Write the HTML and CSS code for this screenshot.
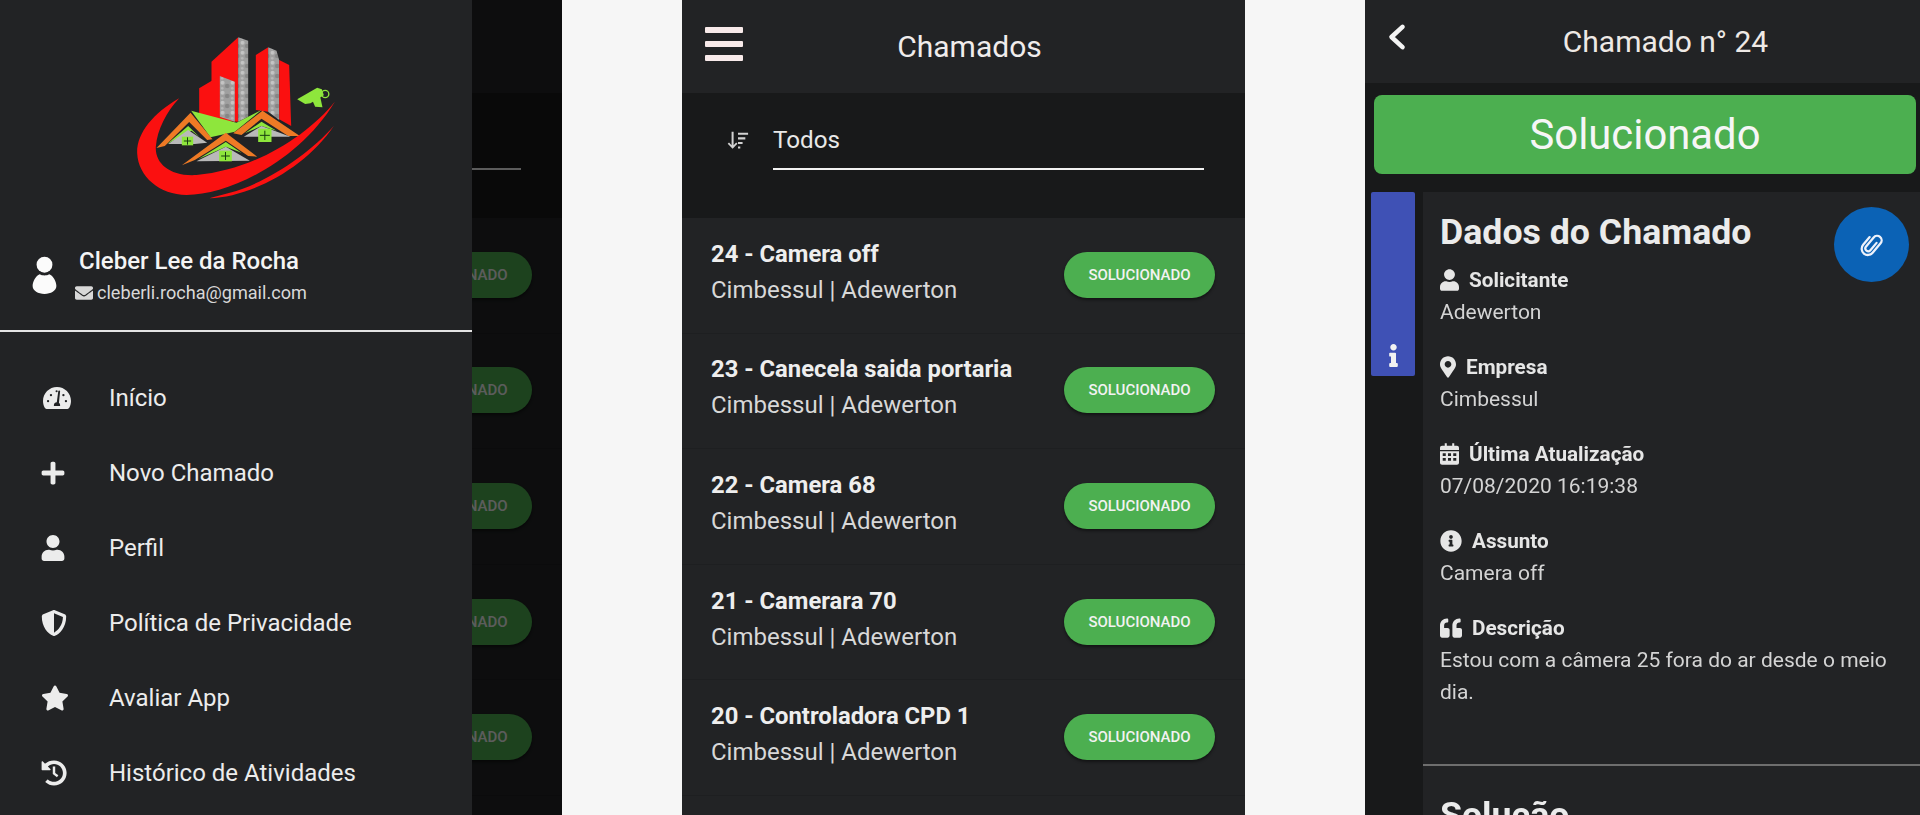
FILE: index.html
```html
<!DOCTYPE html>
<html lang="pt-BR">
<head>
<meta charset="utf-8">
<title>Chamados</title>
<link rel="stylesheet" href="styles.css">
</head>
<body>
<svg class="defs" aria-hidden="true">
  <symbol id="i-user" viewBox="0 0 448 512"><path d="M224 256c70.7 0 128-57.3 128-128S294.7 0 224 0 96 57.3 96 128s57.3 128 128 128zm89.6 32h-16.7c-22.2 10.2-46.9 16-72.9 16s-50.6-5.8-72.9-16h-16.7C60.2 288 0 348.2 0 422.4V464c0 26.5 21.5 48 48 48h352c26.5 0 48-21.5 48-48v-41.6c0-74.2-60.2-134.4-134.4-134.4z"/></symbol>
  <symbol id="i-plus" viewBox="0 0 448 512"><path d="M416 208H272V64c0-17.67-14.33-32-32-32h-32c-17.67 0-32 14.33-32 32v144H32c-17.67 0-32 14.33-32 32v32c0 17.67 14.33 32 32 32h144v144c0 17.67 14.33 32 32 32h32c17.67 0 32-14.33 32-32V304h144c17.67 0 32-14.33 32-32v-32c0-17.67-14.33-32-32-32z"/></symbol>
  <symbol id="i-star" viewBox="0 0 576 512"><path d="M259.3 17.8L194 150.2 47.9 171.5c-26.2 3.8-36.7 36.1-17.7 54.6l105.7 103-25 145.5c-4.5 26.3 23.2 46 46.4 33.7L288 439.6l130.7 68.7c23.2 12.2 50.9-7.4 46.4-33.7l-25-145.5 105.7-103c19-18.5 8.5-50.8-17.7-54.6L382 150.2 316.7 17.8c-11.7-23.6-45.6-23.9-57.4 0z"/></symbol>
  <symbol id="i-marker" viewBox="0 0 384 512"><path d="M172.268 501.67C26.97 291.031 0 255.363 0 192 0 85.961 85.961 0 192 0s192 85.961 192 192c0 63.363-26.97 99.031-172.268 309.67-9.535 13.774-29.93 13.773-39.464 0zM192 272c44.183 0 80-35.817 80-80s-35.817-80-80-80-80 35.817-80 80 35.817 80 80 80z"/></symbol>
  <symbol id="i-mail" viewBox="0 0 512 512"><path d="M502.3 190.8c3.9-3.1 9.7-.2 9.7 4.7V400c0 26.5-21.5 48-48 48H48c-26.5 0-48-21.5-48-48V195.6c0-5 5.7-7.8 9.7-4.7 22.4 17.4 52.1 39.5 154.1 113.6 21.1 15.4 56.7 47.8 92.2 47.6 35.7.3 72-32.8 92.3-47.6 102-74.1 131.6-96.3 154-113.7zM256 320c23.2.4 56.6-29.2 73.4-41.4 132.7-96.3 142.8-104.7 173.4-128.7 5.8-4.5 9.2-11.5 9.2-18.9v-19c0-26.5-21.5-48-48-48H48C21.5 64 0 85.5 0 112v19c0 7.4 3.4 14.3 9.2 18.9 30.6 23.9 40.7 32.4 173.4 128.7 16.8 12.2 50.2 41.8 73.4 41.4z"/></symbol>
  <symbol id="i-info" viewBox="0 0 512 512"><path d="M256 8C119.043 8 8 119.083 8 256c0 136.997 111.043 248 248 248s248-111.003 248-248C504 119.083 392.957 8 256 8zm0 110c23.196 0 42 18.804 42 42s-18.804 42-42 42-42-18.804-42-42 18.804-42 42-42zm56 254c0 6.627-5.373 12-12 12h-88c-6.627 0-12-5.373-12-12v-24c0-6.627 5.373-12 12-12h12v-64h-12c-6.627 0-12-5.373-12-12v-24c0-6.627 5.373-12 12-12h64c6.627 0 12 5.373 12 12v100h12c6.627 0 12 5.373 12 12v24z"/></symbol>
  <symbol id="i-quote" viewBox="0 0 512 512"><path d="M464 256h-80v-64c0-35.3 28.7-64 64-64h8c13.3 0 24-10.7 24-24V56c0-13.3-10.7-24-24-24h-8c-88.4 0-160 71.6-160 160v240c0 26.5 21.5 48 48 48h128c26.5 0 48-21.5 48-48V304c0-26.5-21.5-48-48-48zm-288 0H96v-64c0-35.3 28.7-64 64-64h8c13.3 0 24-10.7 24-24V56c0-13.3-10.7-24-24-24h-8C71.6 32 0 103.6 0 192v240c0 26.5 21.5 48 48 48h128c26.5 0 48-21.5 48-48V304c0-26.5-21.5-48-48-48z"/></symbol>
  <symbol id="i-i" viewBox="0 0 192 512"><path d="M20 424.229h20V279.771H20c-11.046 0-20-8.954-20-20V212c0-11.046 8.954-20 20-20h112c11.046 0 20 8.954 20 20v212.229h20c11.046 0 20 8.954 20 20V492c0 11.046-8.954 20-20 20H20c-11.046 0-20-8.954-20-20v-47.771c0-11.046 8.954-20 20-20zM96 0C56.235 0 24 32.235 24 72s32.235 72 72 72 72-32.235 72-72S135.764 0 96 0z"/></symbol>
  <symbol id="i-cal" viewBox="0 0 448 512"><path fill-rule="evenodd" d="M112 0h48v64h128V0h48v64h64c26 0 48 22 48 48v48H0v-48c0-26 22-48 48-48h64zM0 192h448v272c0 26-22 48-48 48H48c-26 0-48-22-48-48zM64 240v64h72v-64zm124 0v64h72v-64zm124 0v64h72v-64zM64 352v64h72v-64zm124 0v64h72v-64zm124 0v64h72v-64z"/></symbol>
  <symbol id="i-gauge" viewBox="0 0 576 448"><path fill-rule="evenodd" d="M288 0C129 0 0 129 0 288c0 50 13 98 36 139 7 13 20 21 35 21h434c15 0 28-8 35-21 23-41 36-89 36-139C576 129 447 0 288 0zm-8 62a22 22 0 1 1 0 44 22 22 0 0 1 0-44zM104 312a24 24 0 1 1 0-48 24 24 0 0 1 0 48zm60-124a24 24 0 1 1 0-48 24 24 0 0 1 0 48zm188-102l-24 236c14 10 24 28 24 48v18H224v-18c0-32 28-58 60-58l30-226c2-10 10-16 20-14 10 1 18 4 18 14zm68 102a24 24 0 1 1 0-48 24 24 0 0 1 0 48zm52 124a24 24 0 1 1 0-48 24 24 0 0 1 0 48z"/></symbol>
  <symbol id="i-shield" viewBox="0 0 512 512"><path d="M466 83L274 3a48 48 0 0 0-37 0L45 83C27 90 16 108 16 127c0 199 115 337 222 381a48 48 0 0 0 37 0c86-36 221-159 221-381 0-19-12-37-30-44zM256 446V66l176 73c-4 153-90 260-176 307z"/></symbol>
  <symbol id="i-history" viewBox="0 0 512 512"><path d="M504 255.500c.3 137-111.500 248.500-248 248.500-64 0-122-24-166-64-5-5-5-13 0-18l34-34c4-4 11-5 16-1 32 27 72 43 116 43 80 0 176-69 176-174 0-97-79-176-176-176-47 0-90 18-121 49l50 50c8 8 2 21-8 21H24c-7 0-12-5-12-12V35c0-11 13-16 20-8l48 48C125 31 187 8 256 8c137 0 248 111 248 247.500zM280 128h-48v150l82 60 28-39-62-45z"/></symbol>
  <symbol id="i-sort" viewBox="0 0 24 24"><path d="M5 2h2.200v14.500L10 13.700l1.400 1.400L6.100 20.500.8 15.100l1.400-1.400L5 16.500zM12 3h11v2.300H12zM12 8h8v2.300h-8zM12 13h5v2.300h-5zM12 18h2.500v2.300H12z"/></symbol>
  <symbol id="i-clip" viewBox="0 0 24 24"><path fill="none" stroke="currentColor" stroke-width="2" stroke-linecap="round" transform="rotate(40 12 12)" d="M14.500 8v8.500a2.500 2.500 0 0 1-5 0V6a4 4 0 0 1 8 0v11a5.500 5.500 0 0 1-11 0V8"/></symbol>
  <symbol id="i-chevron" viewBox="0 0 24 32"><path fill="none" stroke="currentColor" stroke-width="5" stroke-linecap="round" stroke-linejoin="round" d="M18 5L6 16l12 11"/></symbol>
</svg>

<main class="stage">

  <!-- Aberto: gaveta lateral sobre a lista -->
  <section class="phone phone-list">
    <header class="topbar"></header>
    <div class="filter">
      <div class="select"></div>
    </div>
    <ul class="tickets">
      <li class="ticket"><span class="pill">SOLUCIONADO</span></li>
      <li class="ticket"><span class="pill">SOLUCIONADO</span></li>
      <li class="ticket"><span class="pill">SOLUCIONADO</span></li>
      <li class="ticket"><span class="pill">SOLUCIONADO</span></li>
      <li class="ticket"><span class="pill">SOLUCIONADO</span></li>
    </ul>
    <div class="scrim"></div>
    <aside class="drawer">
      <div class="logo-wrap">
        <svg class="logo" viewBox="40 45 620 495">
          <defs>
            <pattern id="concrete" width="30" height="30" patternUnits="userSpaceOnUse">
              <rect width="30" height="30" fill="#9f9f9f"/>
              <circle cx="8" cy="8" r="6" fill="#c4c4c4"/>
              <circle cx="22" cy="18" r="7" fill="#868686"/>
              <circle cx="7" cy="25" r="4" fill="#b8b8b8"/>
            </pattern>
          </defs>
          <path fill="#fb1010" d="M275 125L355 52V305L275 300Z"/>
          <path fill="url(#concrete)" d="M355 52L385 62V290L355 305Z"/>
          <path fill="#fb1010" d="M238 205L300 168V300L238 290Z"/>
          <path fill="url(#concrete)" d="M300 168L345 185V305L300 290Z"/>
          <path fill="#fb1010" d="M408 105L445 82V275L408 270Z"/>
          <path fill="url(#concrete)" d="M445 82L470 92L478 120V300L445 275Z"/>
          <path fill="#fb1010" d="M478 120L508 135L514 318L478 298Z"/>
          <path fill="#8ee63c" d="M214 272L350 308L425 270L345 335L272 352Z"/>
          <path fill="#ee7a25" d="M110 384L212 278L278 358L262 360L208 306L135 378Z"/>
          <path fill="#8ee63c" d="M142 372L205 318L240 352L215 332Z"/>
          <path fill="#b9b9b9" d="M145 372L205 330L262 368L225 372Z"/>
          <path fill="#8ee63c" d="M186 350H220V376H186Z"/>
          <path fill="#ee7a25" d="M340 340L428 272L540 348L505 348L425 296L365 345Z"/>
          <path fill="#8ee63c" d="M375 340L425 305L470 332L425 318Z"/>
          <path fill="#b9b9b9" d="M372 350L425 318L512 350Z"/>
          <path fill="#8ee63c" d="M415 326H455V366H415Z"/>
          <path fill="#ee7a25" d="M186 436L318 338L412 410L385 408L318 362L225 420Z"/>
          <path fill="#8ee63c" d="M235 418L318 366L365 398L318 380Z"/>
          <path fill="#b9b9b9" d="M230 424L318 380L390 422Z"/>
          <path fill="#8ee63c" d="M298 392H336V424H298Z"/>
          <path stroke="#173d10" stroke-width="3" fill="none" d="M203 352V374M192 363H214M435 332V360M420 346H450M317 396V420M304 408H330"/>
          <path fill="#8ee63c" d="M532 238L592 203L606 208L612 226L572 250L556 252Z"/>
          <path fill="#8ee63c" d="M578 242L600 226L608 262L586 260Z"/>
          <circle cx="616" cy="222" r="11" fill="none" stroke="#8ee63c" stroke-width="4"/>
          <path fill="#fb1010" d="M178 235C100 280 50 340 52 400C55 470 120 525 200 525C330 525 540 420 645 245C560 350 400 450 230 465C150 470 105 430 108 380C112 330 140 275 178 235Z"/>
          <path fill="#fb1010" d="M268 535C400 530 560 440 642 318C570 400 440 490 330 518Z"/>
        </svg>
      </div>
      <div class="profile">
        <svg class="profile-icon" viewBox="0 0 30 48">
          <circle cx="15" cy="11" r="10"/>
          <path d="M9 23c3 2 9 2 12 0 5 2 9 9 9 15 0 6-7 10-15 10S0 44 0 38c0-6 4-13 9-15z"/>
        </svg>
        <div class="profile-text">
          <p class="profile-name">Cleber Lee da Rocha</p>
          <p class="profile-mail"><svg class="mail-icon"><use href="#i-mail"/></svg>cleberli.rocha@gmail.com</p>
        </div>
      </div>
      <nav class="menu">
        <a class="menu-item"><span class="menu-icon"><svg class="ico-gauge"><use href="#i-gauge"/></svg></span>Início</a>
        <a class="menu-item"><span class="menu-icon"><svg class="ico-26"><use href="#i-plus"/></svg></span>Novo Chamado</a>
        <a class="menu-item"><span class="menu-icon"><svg class="ico-26"><use href="#i-user"/></svg></span>Perfil</a>
        <a class="menu-item"><span class="menu-icon"><svg class="ico-28"><use href="#i-shield"/></svg></span>Política de Privacidade</a>
        <a class="menu-item"><span class="menu-icon"><svg class="ico-30"><use href="#i-star"/></svg></span>Avaliar App</a>
        <a class="menu-item"><span class="menu-icon"><svg class="ico-28"><use href="#i-history"/></svg></span>Histórico de Atividades</a>
      </nav>
    </aside>
  </section>

  <!-- Lista de chamados -->
  <section class="phone phone-list">
    <header class="topbar">
      <div class="burger"><span></span><span></span><span></span></div>
      <h1 class="topbar-title">Chamados</h1>
    </header>
    <div class="filter">
      <svg class="sort-icon"><use href="#i-sort"/></svg>
      <div class="select">Todos</div>
    </div>
    <ul class="tickets">
      <li class="ticket"><div class="ticket-text"><p class="ticket-title">24 - Camera off</p><p class="ticket-sub">Cimbessul | Adewerton</p></div><span class="pill">SOLUCIONADO</span></li>
      <li class="ticket"><div class="ticket-text"><p class="ticket-title">23 - Canecela saida portaria</p><p class="ticket-sub">Cimbessul | Adewerton</p></div><span class="pill">SOLUCIONADO</span></li>
      <li class="ticket"><div class="ticket-text"><p class="ticket-title">22 - Camera 68</p><p class="ticket-sub">Cimbessul | Adewerton</p></div><span class="pill">SOLUCIONADO</span></li>
      <li class="ticket"><div class="ticket-text"><p class="ticket-title">21 - Camerara 70</p><p class="ticket-sub">Cimbessul | Adewerton</p></div><span class="pill">SOLUCIONADO</span></li>
      <li class="ticket"><div class="ticket-text"><p class="ticket-title">20 - Controladora CPD 1</p><p class="ticket-sub">Cimbessul | Adewerton</p></div><span class="pill">SOLUCIONADO</span></li>
    </ul>
  </section>

  <!-- Detalhe do chamado -->
  <section class="phone phone-detail">
    <header class="detail-bar">
      <svg class="back"><use href="#i-chevron"/></svg>
      <h1 class="detail-title">Chamado n° 24</h1>
    </header>
    <div class="status">Solucionado</div>
    <div class="detail-body">
      <div class="rail">
        <div class="rail-tab"><svg class="rail-i"><use href="#i-i"/></svg></div>
      </div>
      <article class="card">
        <button class="fab"><svg class="fab-icon"><use href="#i-clip"/></svg></button>
        <div class="card-main">
          <h2 class="card-title">Dados do Chamado</h2>
          <div class="field field-first">
            <p class="field-label"><svg class="field-icon"><use href="#i-user"/></svg>Solicitante</p>
            <p class="field-value">Adewerton</p>
          </div>
          <div class="field">
            <p class="field-label"><svg class="field-icon field-icon-narrow"><use href="#i-marker"/></svg>Empresa</p>
            <p class="field-value">Cimbessul</p>
          </div>
          <div class="field">
            <p class="field-label"><svg class="field-icon"><use href="#i-cal"/></svg>Última Atualização</p>
            <p class="field-value">07/08/2020 16:19:38</p>
          </div>
          <div class="field">
            <p class="field-label"><svg class="field-icon field-icon-wide"><use href="#i-info"/></svg>Assunto</p>
            <p class="field-value">Camera off</p>
          </div>
          <div class="field">
            <p class="field-label"><svg class="field-icon field-icon-wide"><use href="#i-quote"/></svg>Descrição</p>
            <p class="field-value">Estou com a câmera 25 fora do ar desde o meio dia.</p>
          </div>
        </div>
        <div class="card-next">
          <h2 class="card-title">Solução</h2>
        </div>
      </article>
    </div>
  </section>
</main>
</body>
</html>
```

FILE: styles.css
```css
* { box-sizing: border-box; }
html, body { margin: 0; height: 100%; overflow: hidden; }
body {
  background: #f6f6f6;
  font-family: Roboto, "Liberation Sans", sans-serif;
  color: #eeeeee;
}
p, h1, h2, ul { margin: 0; padding: 0; }
ul { list-style: none; }
svg { fill: currentColor; display: block; }
.defs { width: 0; height: 0; overflow: hidden; }

.stage {
  display: flex;
  gap: 120px;
  height: 815px;
  overflow: hidden;
  filter: blur(0.6px);
}
.phone { position: relative; height: 815px; overflow: hidden; background: #222325; flex: none; }
.phone-list { width: 562px; }
.phone-list + .phone-list { width: 563px; }
.phone-detail { flex: 1; background: #18191a; }

/* lista */
.topbar {
  height: 93px;
  display: flex;
  align-items: center;
  justify-content: center;
  position: relative;
  background: #222325;
  padding: 0 0 1px 12px;
}
.topbar-title { font-size: 30px; font-weight: 400; color: #f0ecec; }
.burger {
  position: absolute;
  left: 23px;
  top: 27px;
  width: 38px;
  height: 34px;
  display: flex;
  flex-direction: column;
  justify-content: space-between;
}
.burger span { height: 6px; background: #f8eaea; border-radius: 1px; }

.filter {
  height: 125px;
  background: #18191a;
  display: flex;
  align-items: flex-start;
  padding: 29.500px 41px 0 46px;
  gap: 24px;
  justify-content: flex-end;
}
.sort-icon { width: 22px; height: 22px; margin-top: 7px; color: #d2d2d2; flex: none; }
.select {
  width: 431px;
  flex: none;
  height: 47px;
  font-size: 24.200px;
  line-height: 34px;
  border-bottom: 2px solid #f2f2f2;
  color: #e8e8e8;
}

.ticket {
  height: 115.600px;
  display: flex;
  align-items: center;
  padding: 0 30px 7px 29px;
  border-bottom: 1px solid #1e1f21;
}
.ticket-title { font-size: 23.800px; font-weight: 700; line-height: 30px; color: #eeeeee; white-space: nowrap; }
.ticket-sub { font-size: 24px; line-height: 30px; margin-top: 6px; color: #d8d8d8; white-space: nowrap; }
.pill {
  width: 151px;
  height: 46px;
  margin-left: auto;
  border-radius: 23px;
  background: #4caf50;
  color: #f2f2f2;
  font-size: 15px;
  font-weight: 500;
  display: flex;
  align-items: center;
  justify-content: center;
  box-shadow: 0 2px 3px rgba(0, 0, 0, .45);
  flex: none;
  margin-top: 6px;
}

/* gaveta */
.scrim { position: absolute; inset: 0; background: rgba(0, 0, 0, .62); }
.drawer {
  position: absolute;
  left: 0;
  top: 0;
  bottom: 0;
  width: 472px;
  background: #222325;
}
.logo-wrap { padding: 35px 0 0 1px; display: flex; justify-content: center; }
.logo { width: 207px; height: 165px; }
.profile {
  height: 132px;
  padding: 46px 0 0 30px;
  display: flex;
  gap: 20px;
  border-bottom: 2px solid #e4e4e4;
}
.profile-icon { width: 29px; height: 38px; margin-top: 10px; color: #fbfbfb; flex: none; }
.profile-name { font-size: 24px; font-weight: 500; line-height: 30px; color: #f4f4f4; white-space: nowrap; }
.profile-mail { font-size: 18.100px; line-height: 24px; margin-top: 5px; margin-left: -4px; display: flex; align-items: center; gap: 4px; color: #d8d8d8; white-space: nowrap; }
.mail-icon { width: 18px; height: 18px; }
.menu { padding-top: 28px; }
.menu-item {
  height: 75px;
  display: flex;
  align-items: center;
  padding-left: 41px;
  font-size: 24px;
  color: #ececec;
}
.menu-icon { width: 68px; flex: none; }
.ico-gauge { width: 28px; height: 22px; margin-left: 2px; }
.ico-26 { width: 24px; height: 26px; }
.ico-28 { width: 26px; height: 26px; }
.ico-30 { width: 28px; height: 26px; }

/* detalhe */
.detail-bar {
  height: 83px;
  position: relative;
  display: flex;
  align-items: center;
  justify-content: center;
  background: #222325;
  padding-left: 46px;
}
.detail-title { font-size: 30px; font-weight: 400; color: #eee9e5; margin-bottom: 1px; }
.back { position: absolute; left: 21px; top: 22px; width: 22px; height: 30px; color: #f4f4f4; }
.status {
  margin: 12px 4px 18px 9px;
  height: 79px;
  border-radius: 8px;
  background: #4caf50;
  color: #f6f6f6;
  font-size: 41.800px;
  display: flex;
  align-items: center;
  justify-content: center;
}
.detail-body { display: flex; height: 623px; }
.rail { width: 58px; flex: none; padding-left: 6px; }
.rail-tab {
  width: 44px;
  height: 184px;
  background: #3f51b5;
  border-radius: 2px;
  display: flex;
  align-items: flex-end;
  justify-content: center;
  padding-bottom: 9px;
}
.rail-i { width: 9px; height: 23px; color: #f2f2f2; }
.card { flex: 1; background: #222325; position: relative; }
.card-main { padding: 18px 14px 0 17px; height: 573.500px; border-bottom: 2px solid #6e6e6e; }
.card-title { font-size: 35.700px; font-weight: 700; line-height: 44px; color: #ebebeb; }
.fab {
  position: absolute;
  right: 11px;
  top: 15px;
  width: 75px;
  height: 75px;
  border: 0;
  padding: 0;
  border-radius: 50%;
  background: #0b62b5;
  color: #eef2fb;
  display: flex;
  align-items: center;
  justify-content: center;
}
.fab-icon { width: 27px; height: 27px; }
.field { margin-top: 23px; }
.field-first { margin-top: 10px; }
.field-label {
  display: flex;
  align-items: center;
  gap: 10px;
  font-size: 20.700px;
  font-weight: 700;
  line-height: 32px;
  color: #e6e6e6;
}
.field-icon { width: 19px; height: 22px; flex: none; }
.field-icon-narrow { width: 16px; }
.field-icon-wide { width: 22px; height: 22px; }
.field-value { font-size: 21px; line-height: 32px; color: #d4d4d4; }
.card-next { padding: 27px 17px 0; }
```
